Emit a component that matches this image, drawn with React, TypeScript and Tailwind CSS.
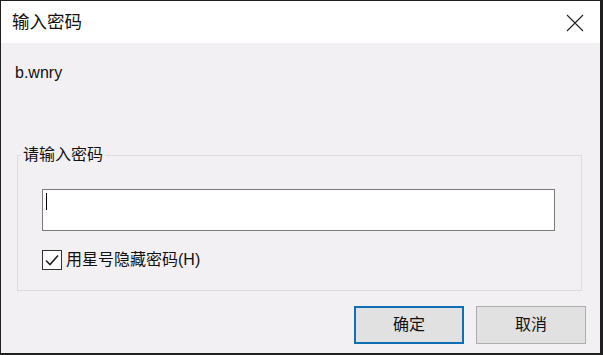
export default function App() {
    const font = { fontFamily: '"Liberation Sans", "Noto Sans CJK SC", sans-serif' };

    return (
        <div
            className="w-[603px] h-[355px] flex flex-col border-l border-t border-r-[3px] border-b-2 border-[#1f1f1f] bg-[#f2f0f2] text-[#111]"
            style={font}
        >
            {/* title bar */}
            <div className="h-[42px] bg-white flex items-center justify-between pl-[11px] pr-[16px]">
                <span className="text-[17.5px] leading-[22px]">输入密码</span>
                <svg width="18" height="18" viewBox="0 0 18 18" className="mt-[1px]">
                    <path d="M1 1 L17 17 M17 1 L1 17" stroke="#222" strokeWidth="1.1" fill="none" />
                </svg>
            </div>

            <div className="pl-[14px] mt-[19px] text-[16px] leading-[22px]">b.wnry</div>

            <fieldset className="ml-[16px] mt-[60px] w-[565px] border border-[#dcdcdc] pb-[19px]">
                <legend className="ml-[3px] px-[2px] text-[16px] leading-[22px]">请输入密码</legend>
                <div className="pl-[24px]">
                    <div className="mt-[23px] w-[513px] h-[42px] bg-white border border-[#7a7a7a] pl-[3px] pt-[3px]">
                        <div className="w-px h-[17px] bg-black" />
                    </div>
                    <label className="mt-[18px] flex items-center gap-[4px] text-[16px] leading-[22px]">
                        <span className="w-[20px] h-[20px] border border-[#333] bg-white flex items-center justify-center">
                            <svg width="16" height="16" viewBox="0 0 16 16">
                                <path d="M2 8.5 L6 12.5 L14 3.5" stroke="#222" strokeWidth="1.6" fill="none" />
                            </svg>
                        </span>
                        用星号隐藏密码(H)
                    </label>
                </div>
            </fieldset>

            <div className="mt-[15px] flex justify-end gap-[12px] pr-[14px]">
                <button className="w-[110px] h-[38px] bg-[#e1e1e1] border-2 border-[#0f6fb4] text-[16px]">确定</button>
                <button className="w-[110px] h-[38px] bg-[#e1e1e1] border border-[#adadad] text-[16px]">取消</button>
            </div>
        </div>
    );
}
